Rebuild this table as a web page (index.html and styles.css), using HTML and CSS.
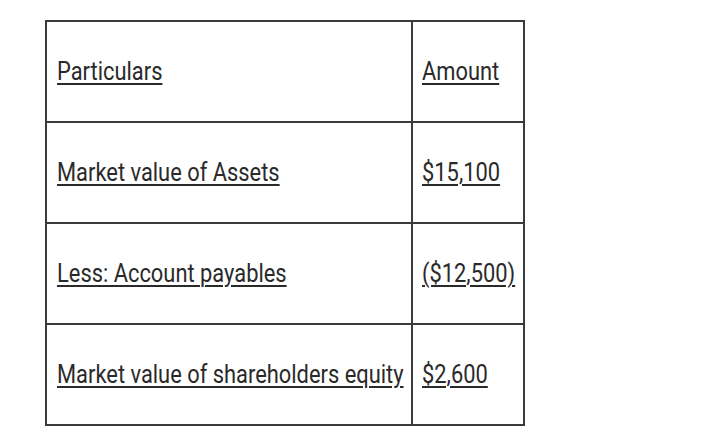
FILE: index.html
```html
<!DOCTYPE html>
<html>
<head>
<meta charset="utf-8">
<link rel="stylesheet" href="styles.css">
</head>
<body>
<table class="sheet">
  <colgroup><col class="c1"><col class="c2"></colgroup>
  <tr><td><span class="u">Particulars</span></td><td><span class="u">Amount</span></td></tr>
  <tr><td><span class="u">Market value of Assets</span></td><td><span class="u">$15,100</span></td></tr>
  <tr><td><span class="u">Less: Account payables</span></td><td><span class="u">($12,500)</span></td></tr>
  <tr><td><span class="u">Market value of shareholders equity</span></td><td><span class="u">$2,600</span></td></tr>
</table>
</body>
</html>
```
FILE: styles.css
```css
html, body { margin: 0; padding: 0; background: #fff; }
body { padding: 20px 0 0 45px; font-family: Roboto, "Liberation Sans", sans-serif; }
.sheet {
  border-collapse: collapse;
  table-layout: fixed;
  width: 478px;
  border: 2px solid #3a3a3a;
}
.c1 { width: 366px; }
.c2 { width: 112px; }
.sheet td {
  border: 2px solid #3a3a3a;
  height: 99px;
  padding: 0 0 0 10px;
  vertical-align: middle;
  font-size: 25px;
  color: #2a2a2a;
  white-space: nowrap;
}
.sheet td + td { padding-left: 9px; }
.u {
  display: inline-block;
  transform: scaleX(0.875);
  transform-origin: left center;
  text-decoration: underline;
  text-underline-offset: 3px;
  text-decoration-thickness: 2px;
}
```
